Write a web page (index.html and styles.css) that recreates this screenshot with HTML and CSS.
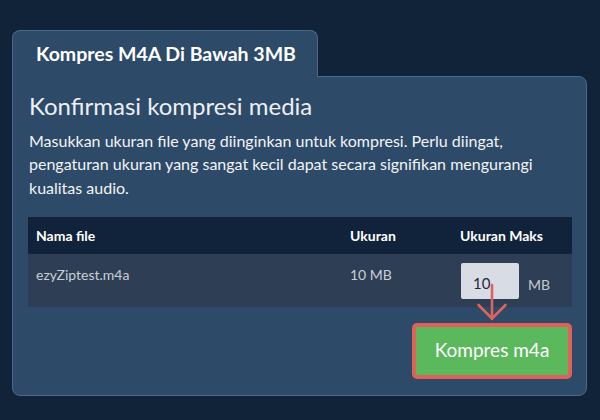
FILE: index.html
```html
<!DOCTYPE html>
<html lang="id">
<head>
<meta charset="utf-8">
<title>Kompres M4A Di Bawah 3MB</title>
<link rel="stylesheet" href="styles.css">
</head>
<body>
<div class="wrap">
  <div class="tab">Kompres M4A Di Bawah 3MB</div>
  <div class="panel">
    <h2 class="title">Konfirmasi kompresi media</h2>
    <p class="desc">Masukkan ukuran file yang diinginkan untuk kompresi. Perlu diingat, pengaturan ukuran yang sangat kecil dapat secara signifikan mengurangi kualitas audio.</p>
    <div class="table">
      <div class="row head">
        <div class="cell">Nama file</div>
        <div class="cell">Ukuran</div>
        <div class="cell">Ukuran Maks</div>
      </div>
      <div class="row body">
        <div class="cell name">ezyZiptest.m4a</div>
        <div class="cell size">10 MB</div>
        <div class="cell max">
          <input class="num" type="text" value="10">
          <span class="unit">MB</span>
        </div>
      </div>
    </div>
    <div class="actions">
      <button class="btn" type="button">Kompres m4a</button>
    </div>
    <svg class="arrow" width="32" height="40" viewBox="0 0 32 40" aria-hidden="true">
      <path d="M16 2 V36 M2.5 22 L16 35.5 L29.5 22" fill="none" stroke="#e0625a" stroke-width="2.6" stroke-linecap="round" stroke-linejoin="round"/>
    </svg>
  </div>
</div>
</body>
</html>
```
FILE: styles.css
```css
* { box-sizing: border-box; }
html, body {
  margin: 0;
  padding: 0;
  background: #112339;
  font-family: Lato, "Open Sans", "Liberation Sans", sans-serif;
}
.wrap {
  padding: 30px 13px 0 12px;
}
.tab {
  position: relative;
  z-index: 1;
  width: 306px;
  margin-bottom: -1px;
  padding: 11px 0 11px 23px;
  line-height: 24px;
  white-space: nowrap;
  font-size: 19.5px;
  font-weight: 700;
  color: #ffffff;
  background: #2d4a69;
  border: 1px solid #4c6888;
  border-bottom: none;
  border-radius: 8px 8px 0 0;
}
.panel {
  position: relative;
  background: #2d4a69;
  border: 1px solid #4c6888;
  border-radius: 0 8px 8px 8px;
  padding: 15px 14px 16px 15px;
}
.title {
  margin: 0 0 0 1px;
  font-size: 24px;
  line-height: 28px;
  font-weight: 400;
  color: #eceff3;
}
.desc {
  margin: 9px 0 0 1px;
  font-size: 16px;
  line-height: 23.3px;
  color: #f2f4f6;
}
.table {
  margin-top: 18px;
}
.row {
  display: grid;
  grid-template-columns: 314px 110px 120px;
}
.head {
  background: #10233a;
  height: 37px;
  align-items: center;
}
.head .cell {
  padding-left: 8px;
  font-size: 14px;
  font-weight: 700;
  color: #ffffff;
}
.body {
  background: #2e3f55;
  height: 53px;
}
.body .cell {
  padding: 12px 0 0 8px;
  font-size: 14px;
  line-height: 17px;
  color: #c9ced6;
}
.body .max {
  display: flex;
  align-items: center;
  gap: 9px;
  padding: 9px 0 0 9px;
  height: 45px;
}
.num {
  width: 58px;
  height: 36px;
  margin: 0;
  padding: 4px 0 0 12px;
  border: none;
  border-radius: 2px;
  background: #d8dce4;
  color: #1f2a37;
  font-family: inherit;
  font-size: 15px;
}
.unit {
  padding-top: 8px;
  font-size: 14px;
  color: #c3c9d1;
}
.actions {
  display: flex;
  justify-content: flex-end;
  margin-top: 16px;
}
.btn {
  width: 160px;
  height: 56px;
  margin: 0;
  padding: 0 0 2px;
  border: 4px solid #e0605a;
  border-radius: 5px;
  background: #5cb85c;
  color: #ffffff;
  font-family: inherit;
  font-size: 19px;
  font-weight: 400;
}
.arrow {
  position: absolute;
  left: 463px;
  top: 206px;
}
```
